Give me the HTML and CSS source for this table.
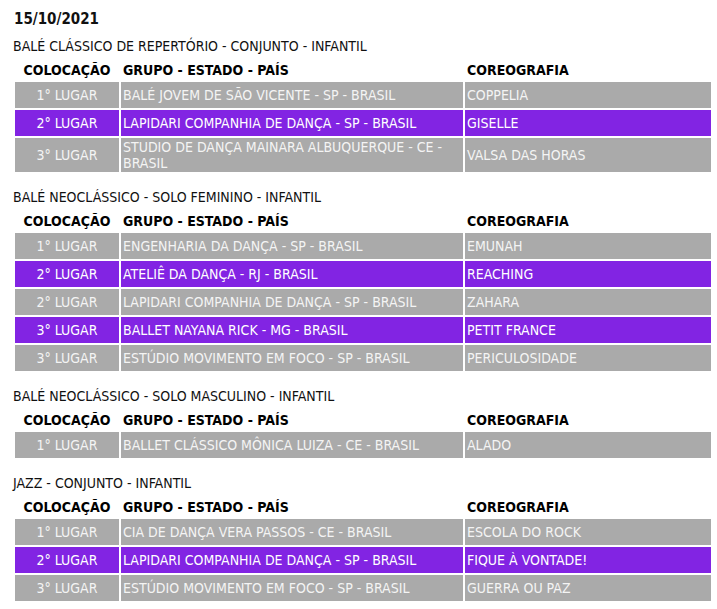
FILE: index.html
```html
<!DOCTYPE html>
<html lang="pt-BR">
<head>
<meta charset="utf-8">
<title>Resultados</title>
<link rel="stylesheet" href="styles.css">
</head>
<body>
<div class="page">
  <div class="date">15/10/2021</div>

  <div class="cat">BALÉ CLÁSSICO DE REPERTÓRIO - CONJUNTO - INFANTIL</div>
  <table class="res">
    <colgroup><col class="c1"><col class="c2"><col class="c3"></colgroup>
    <thead><tr><th class="pos">COLOCAÇÃO</th><th>GRUPO - ESTADO - PAÍS</th><th>COREOGRAFIA</th></tr></thead>
    <tbody>
      <tr class="g"><td class="pos">1° LUGAR</td><td>BALÉ JOVEM DE SÃO VICENTE - SP - BRASIL</td><td>COPPELIA</td></tr>
      <tr class="p"><td class="pos">2° LUGAR</td><td>LAPIDARI COMPANHIA DE DANÇA - SP - BRASIL</td><td>GISELLE</td></tr>
      <tr class="g"><td class="pos">3° LUGAR</td><td>STUDIO DE DANÇA MAINARA ALBUQUERQUE - CE - BRASIL</td><td>VALSA DAS HORAS</td></tr>
    </tbody>
  </table>

  <div class="cat">BALÉ NEOCLÁSSICO - SOLO FEMININO - INFANTIL</div>
  <table class="res">
    <colgroup><col class="c1"><col class="c2"><col class="c3"></colgroup>
    <thead><tr><th class="pos">COLOCAÇÃO</th><th>GRUPO - ESTADO - PAÍS</th><th>COREOGRAFIA</th></tr></thead>
    <tbody>
      <tr class="g"><td class="pos">1° LUGAR</td><td>ENGENHARIA DA DANÇA - SP - BRASIL</td><td>EMUNAH</td></tr>
      <tr class="p"><td class="pos">2° LUGAR</td><td>ATELIÊ DA DANÇA - RJ - BRASIL</td><td>REACHING</td></tr>
      <tr class="g"><td class="pos">2° LUGAR</td><td>LAPIDARI COMPANHIA DE DANÇA - SP - BRASIL</td><td>ZAHARA</td></tr>
      <tr class="p"><td class="pos">3° LUGAR</td><td>BALLET NAYANA RICK - MG - BRASIL</td><td>PETIT FRANCE</td></tr>
      <tr class="g"><td class="pos">3° LUGAR</td><td>ESTÚDIO MOVIMENTO EM FOCO - SP - BRASIL</td><td>PERICULOSIDADE</td></tr>
    </tbody>
  </table>

  <div class="cat">BALÉ NEOCLÁSSICO - SOLO MASCULINO - INFANTIL</div>
  <table class="res">
    <colgroup><col class="c1"><col class="c2"><col class="c3"></colgroup>
    <thead><tr><th class="pos">COLOCAÇÃO</th><th>GRUPO - ESTADO - PAÍS</th><th>COREOGRAFIA</th></tr></thead>
    <tbody>
      <tr class="g"><td class="pos">1° LUGAR</td><td>BALLET CLÁSSICO MÔNICA LUIZA - CE - BRASIL</td><td>ALADO</td></tr>
    </tbody>
  </table>

  <div class="cat">JAZZ - CONJUNTO - INFANTIL</div>
  <table class="res">
    <colgroup><col class="c1"><col class="c2"><col class="c3"></colgroup>
    <thead><tr><th class="pos">COLOCAÇÃO</th><th>GRUPO - ESTADO - PAÍS</th><th>COREOGRAFIA</th></tr></thead>
    <tbody>
      <tr class="g"><td class="pos">1° LUGAR</td><td>CIA DE DANÇA VERA PASSOS - CE - BRASIL</td><td>ESCOLA DO ROCK</td></tr>
      <tr class="p"><td class="pos">2° LUGAR</td><td>LAPIDARI COMPANHIA DE DANÇA - SP - BRASIL</td><td>FIQUE À VONTADE!</td></tr>
      <tr class="g"><td class="pos">3° LUGAR</td><td>ESTÚDIO MOVIMENTO EM FOCO - SP - BRASIL</td><td>GUERRA OU PAZ</td></tr>
    </tbody>
  </table>
</div>
</body>
</html>
```

FILE: styles.css
```css
html, body {
  margin: 0;
  padding: 0;
  background: #ffffff;
}

.page {
  padding: 11px 0 0 13px;
  font-family: "DejaVu Sans Condensed", "DejaVu Sans", sans-serif;
  font-stretch: condensed;
  font-size: 14px;
  line-height: 16px;
  color: #111111;
}

.date {
  font-weight: bold;
  font-size: 15px;
  padding-left: 1px;
}

.cat {
  margin-top: 11px;
}

.res {
  border-collapse: separate;
  border-spacing: 2px;
  margin: 3px 0 15px 0;
  table-layout: fixed;
  width: 700px;
}

.res + .cat {
  margin-top: 0;
}

.c1 { width: 104px; }
.c2 { width: 342px; }
.c3 { width: 246px; }

.res th {
  height: 21px;
  padding: 0 2px;
  font-weight: bold;
  text-align: left;
  color: #000000;
  vertical-align: middle;
}

.res th.pos {
  text-align: center;
}

.res tbody tr {
  height: 26px;
}

.res td {
  padding: 1px 2px;
  vertical-align: middle;
  text-align: left;
  color: #f4f4f4;
}

.res td.pos {
  text-align: center;
}

.res tr.g td {
  background: #aaaaaa;
}

.res tr.p td {
  background: #8224e3;
  color: #ffffff;
}
```
